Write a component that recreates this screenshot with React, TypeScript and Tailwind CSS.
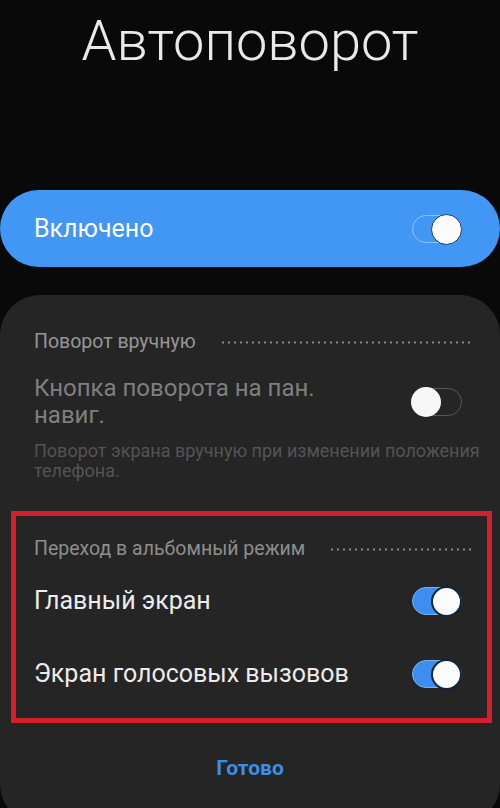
import React from "react";

type Variant = "pill" | "on" | "off";

function Toggle({ variant }: { variant: Variant }) {
  if (variant === "off") {
    return (
      <div className="relative h-[28px] w-[50px] shrink-0 rounded-full border-[1.5px] border-[#565656]">
        <div className="absolute left-[-2px] top-[-2.5px] h-[30px] w-[30px] rounded-full bg-[#f7f7f7]" />
      </div>
    );
  }
  const track =
    variant === "pill"
      ? "bg-[#4296f4] border border-[#8fc3fa]"
      : "bg-[#3d8ef0] border border-[#78b2f4]";
  const knob =
    variant === "pill"
      ? "border-[1.5px] border-[#1b3a62]"
      : "border-[2px] border-[#10243a]";
  return (
    <div className={`relative h-[28px] w-[50px] shrink-0 rounded-full ${track}`}>
      <div
        className={`absolute right-[-1px] top-[-2px] h-[31px] w-[31px] rounded-full bg-[#fbfbfb] ${knob}`}
      />
    </div>
  );
}

function Dots({ extend = false }: { extend?: boolean }) {
  return (
    <div
      className={`ml-6 h-[3px] flex-1 bg-[radial-gradient(circle,#8c8c8c_0.9px,transparent_1.3px)] bg-[length:6px_3px] ${
        extend ? "-mr-[9px]" : ""
      }`}
    />
  );
}

export default function App() {
  return (
    <div className="flex h-[808px] w-[500px] flex-col overflow-hidden bg-[#090909] font-['Roboto','Noto_Sans',sans-serif]">
      {/* screen title */}
      <div className="shrink-0 pt-[13px] text-center text-[56px] font-light leading-[56px] text-[#e9e9e9]">
        Автоповорот
      </div>

      {/* master switch */}
      <div className="mt-[121px] flex h-[77px] shrink-0 items-center justify-between rounded-full bg-[#4296f4] pl-[34px] pr-[38px]">
        <span className="text-[25px] leading-[28px] text-white">Включено</span>
        <Toggle variant="pill" />
      </div>

      {/* options sheet */}
      <div className="mt-[28px] h-[529px] shrink-0 rounded-[40px] bg-[#252525] pt-[36px]">
        <div className="flex items-center pl-[34px] pr-[30px]">
          <span className="text-[19.5px] leading-[22px] text-[#969696]">Поворот вручную</span>
          <Dots />
        </div>

        <div className="mt-[22px] flex items-center justify-between pl-[34px] pr-[38px]">
          <span className="w-[330px] text-[24px] leading-[27px] text-[#7f7f7f]">
            Кнопка поворота на пан. навиг.
          </span>
          <Toggle variant="off" />
        </div>

        <div className="mt-[12px] pl-[34px] pr-[12px] text-[18px] leading-[20px] text-[#545454]">
          Поворот экрана вручную при изменении положения телефона.
        </div>

        <div className="ml-[11px] mr-[8px] mt-[30px] border-[5px] border-[#d61f2c] pb-[22px] pl-[18px] pr-[25px] pt-[22px]">
          <div className="flex items-center">
            <span className="text-[19.5px] leading-[22px] text-[#8e8e8e]">
              Переход в альбомный режим
            </span>
            <Dots extend />
          </div>
          <div className="mt-[19px] flex h-[44px] items-center justify-between">
            <span className="text-[25px] leading-[28px] text-[#ececec]">Главный экран</span>
            <Toggle variant="on" />
          </div>
          <div className="mt-[29px] flex h-[44px] items-center justify-between">
            <span className="text-[25px] leading-[28px] text-[#ececec]">Экран голосовых вызовов</span>
            <Toggle variant="on" />
          </div>
        </div>

        <div className="mt-[33px] text-center text-[21px] font-bold leading-[24px] text-[#3b8fe8]">
          Готово
        </div>
      </div>
    </div>
  );
}
